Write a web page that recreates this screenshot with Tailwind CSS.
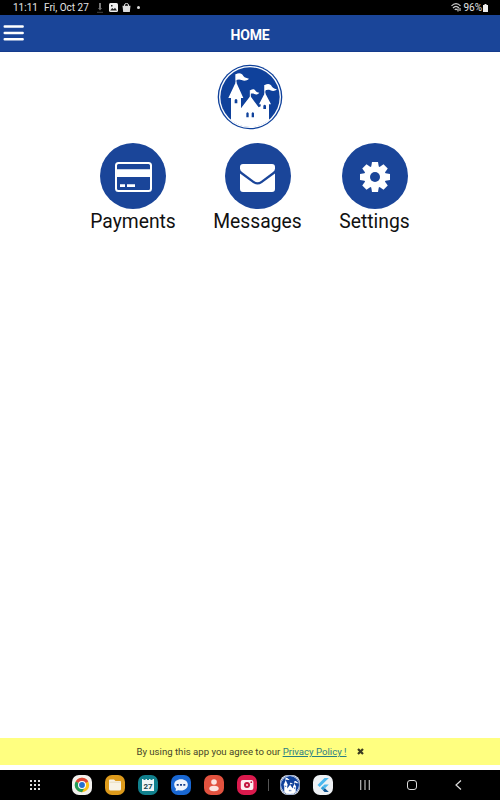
<!DOCTYPE html>
<html lang="en">
<head>
    <meta charset="UTF-8">
    <meta name="viewport" content="width=device-width, initial-scale=1.0">
    <title>Home</title>
    <script src="https://cdn.jsdelivr.net/npm/@tailwindcss/browser@4"></script>
</head>
<body class="bg-white font-[Roboto,sans-serif]">
    <div class="flex flex-col h-[800px] w-[500px] overflow-hidden">

        <!-- Status bar -->
        <div class="h-[15px] shrink-0 bg-black text-[#e4e4e4] text-[10px] leading-[15px] flex justify-between pl-[13px] pr-3">
            <div class="flex items-center">
                <span class="w-[31px]">11:11</span>
                <span class="w-[52px] whitespace-nowrap">Fri, Oct 27</span>
                <svg class="w-2 h-[10px]" viewBox="0 0 8 10">
                    <path d="M4 0v6" stroke="#bbb" stroke-width="1.3"/>
                    <path d="M2 5h4L4 7.500z" fill="#777"/>
                    <path d="M1 9.300h6" stroke="#444"/>
                </svg>
                <svg class="w-[9px] h-[9px] ml-[5px]" viewBox="0 0 9 9">
                    <rect width="9" height="9" rx="1.500" fill="#eee"/>
                    <path d="M1.200 7.500l2-2.500 1.500 1.300 1.300-1.500 2 2.700z" fill="#222"/>
                    <rect x="2" y="2" width="1.500" height="1.500" fill="#222"/>
                </svg>
                <svg class="w-[9px] h-[9px] ml-1" viewBox="0 0 9 9">
                    <path d="M2.500 3V2a2 1.500 0 0 1 4 0v1" fill="none" stroke="#ddd"/>
                    <path d="M.5 2.800h8L7.800 9H1.200z" fill="#ddd"/>
                </svg>
                <span class="w-[3px] h-[3px] rounded-full bg-[#ddd] ml-[6px]"></span>
            </div>
            <div class="flex items-center">
                <svg class="w-[10px] h-[9px] mr-[2px]" viewBox="0 0 10 9" fill="none" stroke="#ccc" stroke-width="1.200">
                    <path d="M.5 3C3-.2 7-.2 9.500 3M2 5c2-2.300 4-2.300 6 0M3.800 6.800c.8-.8 1.600-.8 2.400 0"/>
                    <path d="M7 5.500v3M9 5v3"/>
                </svg>
                <span>96%</span>
                <svg class="w-[5px] h-2 ml-px" viewBox="0 0 5 8">
                    <path d="M1.500 0h2v1H5v7H0V1h1.500z" fill="#eee"/>
                </svg>
            </div>
        </div>

        <!-- Header -->
        <header class="h-[37px] shrink-0 bg-[#1a4599] border-b border-[#153b8c] grid grid-cols-3 items-center text-white">
            <svg class="w-[21px] h-4 ml-[3px]" viewBox="0 0 21 16" stroke="#fff" stroke-width="2.400" stroke-linecap="round">
                <path d="M1.700 1.500h18M1.700 8h18M1.700 14.300h18"/>
            </svg>
            <h1 class="text-center text-[14px] tracking-[-0.2px] font-bold pt-1">HOME</h1>
        </header>

        <main class="grow pt-3">
            <svg class="w-[66px] h-[66px] mx-auto" viewBox="21 131 198 198">
                <symbol id="castle" viewBox="21 131 198 198">
                    <clipPath id="disc"><circle cx="120" cy="230" r="90"/></clipPath>
                    <circle cx="120" cy="230" r="97" fill="#0f419b"/>
                    <circle cx="120" cy="230" r="93" fill="#fff"/>
                    <circle cx="120" cy="230" r="89" fill="#0f419b"/>
                    <g fill="#fff" clip-path="url(#disc)">
                        <path d="M78 184L100 233h-7v31l28-37 25 34 6-3v-6h-5l18-35 18 35h-6v80H63v-99h-8z"/>
                        <path d="M76.500 162h3v26h-3zM119.500 210h3v20h-3zM163 194h3v28h-3z"/>
                        <path d="M77 162c12-6 19-2 23 5 5 6 10 6 17 8-7 7-15 7-22 4-7-3-12-2-18 1zM121 210c8-5 13-3 16 2 3 4 6 4 11 5-4 6-11 6-15 4-4-2-8-2-12 0zM164 194c12-6 18-2 22 5 4 5 9 6 15 8-6 6-13 6-20 3-7-3-12-1-17 2z"/>
                    </g>
                    <path fill="#0f419b" d="M74 249v-10q4-6 8 0v10zM109 291v-12q3.500-6 7 0v12zM125 291v-12q3.500-6 7 0v12zM160 266v-10q4-6 8 0v10z"/>
                </symbol>
                <use href="#castle" x="21" y="131" width="198" height="198"/>
            </svg>

            <!-- Menu -->
            <nav class="flex justify-center gap-[38px] mt-[12.5px] text-[19.300px] leading-6 text-[#111]">
                <a href="#" class="flex flex-col items-center gap-[1.500px] w-[85px]">
                    <span class="flex items-center justify-center w-[66px] h-[66px] rounded-full bg-[#1a4599]">
                        <svg class="w-[37px] h-[30px] mt-[3px]" viewBox="0 0 37 30">
                            <rect x="1" y="1" width="35" height="28" rx="2.500" fill="none" stroke="#fff" stroke-width="2"/>
                            <path d="M1 7.300h35v7.700H1zM5 22.300h5V25H5zM12 22.300h8V25h-8z" fill="#fff"/>
                        </svg>
                    </span>
                    <span>Payments</span>
                </a>
                <a href="#" class="flex flex-col items-center gap-[1.500px] w-[88px]">
                    <span class="flex items-center justify-center w-[66px] h-[66px] rounded-full bg-[#1a4599]">
                        <svg class="w-[35px] h-7 mt-1" viewBox="0 0 35 28" fill="#fff">
                            <path d="M3 0h29q3 0 3 3v1.500q0 2-2 3.500L21 17q-3.500 2.500-7 0L2 8Q0 6.500 0 4.500V3q0-3 3-3z"/>
                            <path d="M0 9.500L13 19q4.500 3 9 0l13-9.500V25q0 3-3 3H3q-3 0-3-3z"/>
                        </svg>
                    </span>
                    <span>Messages</span>
                </a>
                <a href="#" class="flex flex-col items-center gap-[1.500px] w-[70px]">
                    <span class="flex items-center justify-center w-[66px] h-[66px] rounded-full bg-[#1a4599]">
                        <svg class="w-[30px] h-[30px] mt-[3px]" viewBox="-15 -15 30 30">
                            <g fill="#fff">
                                <circle r="11"/>
                                <path id="tooth" d="M-4-9L-3-15h6L4-9z"/>
                                <use href="#tooth" transform="rotate(45)"/>
                                <use href="#tooth" transform="rotate(90)"/>
                                <use href="#tooth" transform="rotate(135)"/>
                                <use href="#tooth" transform="rotate(180)"/>
                                <use href="#tooth" transform="rotate(225)"/>
                                <use href="#tooth" transform="rotate(270)"/>
                                <use href="#tooth" transform="rotate(315)"/>
                            </g>
                            <circle r="5" fill="#1a4599"/>
                        </svg>
                    </span>
                    <span>Settings</span>
                </a>
            </nav>
        </main>

        <!-- Privacy notice -->
        <div class="h-[27px] shrink-0 mb-[5px] bg-[#ffff80] flex items-center justify-center text-[9.600px] text-[#45452a]">
            <span class="whitespace-nowrap pt-px">By using this app you agree to our <a href="#" class="underline text-[#2b7d83]">Privacy Policy !</a></span>
            <svg class="w-[7px] h-[7px] ml-[10px]" viewBox="0 0 7 7">
                <path d="M1 1l5 5M6 1L1 6" stroke="#3a3a20" stroke-width="2.200"/>
            </svg>
        </div>

        <!-- Taskbar -->
        <div class="h-[30px] shrink-0 bg-black flex items-center pl-[30px]">
            <svg class="w-[10px] h-[10px]" viewBox="0 0 10 10" fill="none" stroke="#ddd" stroke-width="2" stroke-dasharray="2 2">
                <path d="M0 1h10M0 5h10M0 9h10"/>
            </svg>
            <div class="flex gap-[13px] ml-8">
                <svg class="w-5 h-5" viewBox="0 0 20 20">
                    <rect width="20" height="20" rx="7" fill="#f2f0ee"/>
                    <circle cx="10" cy="10" r="7.200" fill="#fbc116"/>
                    <path d="M10 10L3.760 6.400A7.200 7.200 0 0 1 16.240 6.400z" fill="#db4437"/>
                    <path d="M3.760 6.400A7.200 7.200 0 0 0 10 17.200L13 11.800 10 10z" fill="#229a55"/>
                    <circle cx="10" cy="10" r="4" fill="#fff"/>
                    <circle cx="10" cy="10" r="2.900" fill="#246fd0"/>
                </svg>
                <svg class="w-5 h-5" viewBox="0 0 20 20">
                    <rect width="20" height="20" rx="7" fill="#dd9a1b"/>
                    <path d="M5 4.500h4l1.500 1.500H15q1 0 1 1v7q0 1.500-1.500 1.500h-9Q4 15.500 4 14V5.500q0-1 1-1z" fill="#f8f3e6"/>
                    <path d="M4.500 7.200h11" stroke="#e3d3ae" stroke-width=".7"/>
                </svg>
                <svg class="w-5 h-5" viewBox="0 0 20 20">
                    <rect width="20" height="20" rx="7" fill="#11808d"/>
                    <path d="M4 4h1.500v1h2V4H9v1h2V4h1.500v1h2V4H16v12H4z" fill="#eef6f6"/>
                    <text x="10" y="13.500" text-anchor="middle" font-size="8" font-weight="700" fill="#174650">27</text>
                </svg>
                <svg class="w-5 h-5" viewBox="0 0 20 20">
                    <rect width="20" height="20" rx="7" fill="#1967d2"/>
                    <path d="M10 4.200c4 0 6.800 2.300 6.800 5.500S14 15.500 10 15.500q-1.300 0-2.400-.3L4.500 16l.5-2.300Q3.200 12 3.200 9.700C3.200 6.500 6 4.200 10 4.200z" fill="#eef3fc"/>
                    <path d="M5.700 9h2v1.800h-2zM9 9h2v1.800H9zM12.300 9h2v1.800h-2z" fill="#173f8a"/>
                </svg>
                <svg class="w-5 h-5" viewBox="0 0 20 20">
                    <rect width="20" height="20" rx="7" fill="#e2523f"/>
                    <circle cx="10" cy="7" r="2.800" fill="#fbe3df"/>
                    <ellipse cx="10" cy="13.500" rx="4.700" ry="2.700" fill="#fbe3df"/>
                </svg>
                <svg class="w-5 h-5" viewBox="0 0 20 20">
                    <rect width="20" height="20" rx="7" fill="#db1a4d"/>
                    <rect x="3.800" y="5" width="12.600" height="10" rx="2" fill="#fcecf0"/>
                    <circle cx="10" cy="10" r="3" fill="#c4153f"/>
                    <circle cx="10" cy="10" r="1" fill="#fcecf0"/>
                    <circle cx="14.300" cy="7.200" r=".9" fill="#c4153f"/>
                </svg>
            </div>
            <div class="w-px h-3 bg-[#555] ml-[11px]"></div>
            <div class="flex gap-[13px] ml-[11px]">
                <svg class="w-5 h-5" viewBox="0 0 20 20">
                    <rect width="20" height="20" rx="8" fill="#e8ebf2"/>
                    <use href="#castle" width="20" height="20"/>
                </svg>
                <svg class="w-5 h-5" viewBox="0 0 20 20">
                    <rect width="20" height="20" rx="7" fill="#eef1f4"/>
                    <path d="M11.500 3h4.300L6.700 12.100 4.500 10z" fill="#4cb8ee"/>
                    <path d="M11.500 9.500h4.300L12 13.200 9.900 11.100z" fill="#4cb8ee"/>
                    <path d="M7.800 13.200l2.100-2.100 2.100 2.100-2.100 2.100z" fill="#2ea0dc"/>
                    <path d="M9.900 15.300l2.100-2.100 3.800 3.800h-4.300z" fill="#14558f"/>
                </svg>
            </div>
            <svg class="w-[10px] h-[10px] ml-[27px]" viewBox="0 0 10 10" stroke="#bbb" stroke-width="1.200">
                <path d="M.7 0v10M5 0v10M9.300 0v10"/>
            </svg>
            <div class="w-[10px] h-[10px] rounded-[3px] border border-[#ddd] ml-[37px]"></div>
            <svg class="w-[7px] h-[10px] ml-[38px]" viewBox="0 0 7 10" fill="none" stroke="#ddd" stroke-width="1.200">
                <path d="M6 .5L1 5l5 4.500"/>
            </svg>
        </div>
    </div>
</body>
</html>
